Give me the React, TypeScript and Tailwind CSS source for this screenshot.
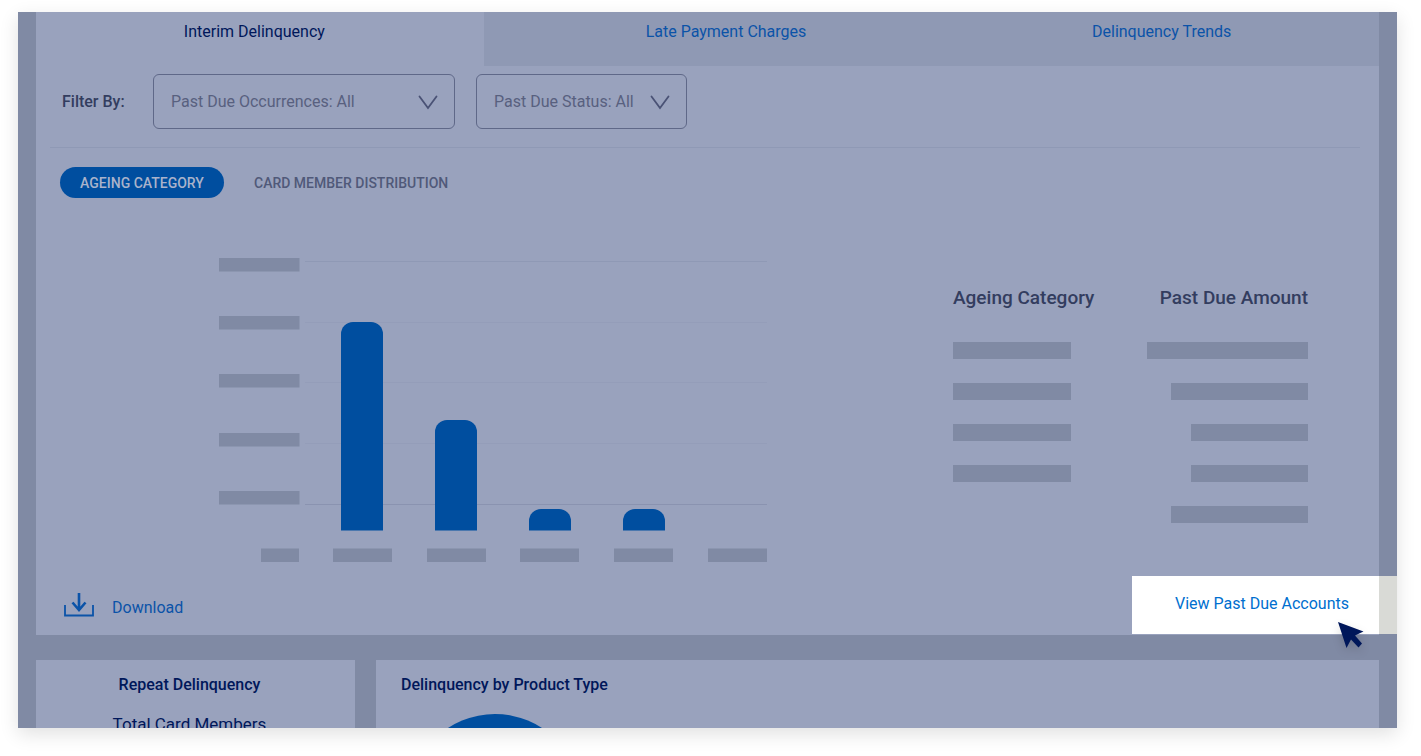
import React from "react";

const yTicks = [
  { label: 18, line: 21, color: "#8f99b5" },
  { label: 76, line: 82, color: "#949db9" },
  { label: 134, line: 142, color: "#949db9" },
  { label: 193, line: 203, color: "#949db9" },
  { label: 251, line: 264, color: "#8a93b0" },
];

const bars = [
  { x: 122, height: 208 },
  { x: 216, height: 110 },
  { x: 310, height: 21 },
  { x: 404, height: 21 },
];

const xLabels = [
  { x: 42, width: 38 },
  { x: 114, width: 59 },
  { x: 208, width: 59 },
  { x: 301, width: 59 },
  { x: 395, width: 59 },
  { x: 489, width: 59 },
];

function AgeingChart() {
  return (
    <svg width="549" height="322" viewBox="0 0 549 322" role="img" aria-label="Past due amount by ageing category">
      {yTicks.map((t) => (
        <g key={t.label}>
          <rect x="0" y={t.label} width="80.500" height="13.500" fill="#808aa4" />
          <rect x="86" y={t.line} width="462" height="1" fill={t.color} />
        </g>
      ))}
      {bars.map((b) => {
        const top = 290 - b.height;
        return (
          <path
            key={b.x}
            d={`M${b.x} 290.500V${top + 12}a12 12 0 0 1 12 -12h18a12 12 0 0 1 12 12V290.500z`}
            fill="#004e9f"
          />
        );
      })}
      {xLabels.map((l) => (
        <rect key={l.x} x={l.x} y="308.500" width={l.width} height="13.500" fill="#808aa4" />
      ))}
    </svg>
  );
}

function FilterSelect({ name, label, className }: { name: string; label: string; className: string }) {
  return (
    <div className={`relative ${className}`}>
      <select
        aria-label={name}
        className="h-[55px] w-full appearance-none rounded-md border border-[#5f6888] bg-transparent pl-[17px] text-base text-[#58607f]"
      >
        <option>{label}</option>
      </select>
      <svg
        className="pointer-events-none absolute top-[21px] right-4"
        width="21"
        height="15"
        viewBox="0 0 21 15"
        fill="none"
        stroke="#4a5275"
        strokeWidth="1.800"
      >
        <path d="M1.500 1.500 10 13 18.500 1.500" strokeLinecap="round" strokeLinejoin="miter" />
      </svg>
    </div>
  );
}

const rows = [
  { category: true, amount: "w-[161px]" },
  { category: true, amount: "w-[137px]" },
  { category: true, amount: "w-[117px]" },
  { category: true, amount: "w-[117px]" },
  { category: false, amount: "w-[137px]" },
];

function AgeingTable() {
  return (
    <table className="w-[355px] border-collapse">
      <thead>
        <tr className="h-6 text-[19px] leading-6 text-[#333d5f]">
          <th className="p-0 text-left font-medium">Ageing Category</th>
          <th className="p-0 text-right font-medium">Past Due Amount</th>
        </tr>
        <tr className="h-5" aria-hidden="true" />
      </thead>
      <tbody>
        {rows.map((r, i) => (
          <tr key={i} className="h-[41px]">
            <td className="p-0">{r.category && <div className="h-[17px] w-[118px] bg-[#808aa4]" />}</td>
            <td className="p-0">
              <div className={`ml-auto h-[17px] bg-[#808aa4] ${r.amount}`} />
            </td>
          </tr>
        ))}
      </tbody>
    </table>
  );
}

export default function App() {
  return (
    <div className="h-screen overflow-hidden bg-white pt-3 pr-6 pb-7 pl-[18px] font-['Roboto','Liberation_Sans',sans-serif]">
      <main className="h-full overflow-hidden bg-[#808aa4] px-[18px] shadow-[0_6px_18px_rgba(0,0,0,0.12)]">
        <section className="relative flex flex-col bg-[#99a2bd]">
          <nav className="grid grid-cols-3 text-center text-base leading-6">
            <button className="flex h-[54px] justify-center pt-2 pr-[11px] text-[#00175a]">Interim Delinquency</button>
            <button className="flex h-[54px] justify-center bg-[#8f99b4] pt-2 pl-[37px] text-[#0b53a8]">
              Late Payment Charges
            </button>
            <button className="flex h-[54px] justify-center bg-[#8f99b4] pt-2 pl-[13px] text-[#0b53a8]">
              Delinquency Trends
            </button>
          </nav>

          <div className="mr-[19px] ml-[14px] flex items-center border-b border-[#8f99b5] pt-2 pb-[18px] pl-3">
            <span className="w-[91px] text-base font-medium text-[#333d5f]">Filter By:</span>
            <FilterSelect name="Past due occurrences" label="Past Due Occurrences: All" className="w-[302px]" />
            <FilterSelect name="Past due status" label="Past Due Status: All" className="ml-[21px] w-[211px]" />
          </div>

          <div className="flex gap-[30px] pt-[19px] pl-6 text-sm font-medium">
            <button className="h-[31px] w-[164px] rounded-full bg-[#004e9f] text-[#a9b3cb]">AGEING CATEGORY</button>
            <button className="h-[31px] text-[#505979]">CARD MEMBER DISTRIBUTION</button>
          </div>

          <div className="flex justify-between pt-[42px] pr-[71px] pl-[183px]">
            <AgeingChart />
            <div className="pt-[46px]">
              <AgeingTable />
            </div>
          </div>

          <a href="#download" className="flex h-[73px] items-center gap-[18px] pt-[18px] pl-7 text-base text-[#0b53a8]">
            <svg width="30" height="24" viewBox="0 0 30 24" fill="none" stroke="#0b53a8" className="mb-[6px]">
              <path d="M1 12V22.500H29V12" strokeWidth="1.800" />
              <path d="M15 0V16M8.500 9.500 15 17l6.500-7.500" strokeWidth="2.600" />
            </svg>
            <span className="mb-1 pt-1">Download</span>
          </a>

          <div className="absolute -right-[18px] bottom-px flex h-[58px] w-[265px]">
            <div className="flex flex-1 justify-end bg-white pt-4 pr-[30px]">
              <a href="#accounts" className="text-base leading-6 whitespace-nowrap text-[#006fcf]">
                View Past Due Accounts
              </a>
            </div>
            <div className="w-[18px] bg-[#d9dad6]" />
            <svg
              className="absolute right-7 -bottom-[20px] drop-shadow-[0_4px_5px_rgba(0,0,0,0.15)]"
              width="31"
              height="32"
              viewBox="0 0 31 32"
            >
              <path d="M0 0 25.500 9.500 17 13.500 24 21.500 20.500 25.500 13 17.500 8.500 26Z" fill="#00175a" />
            </svg>
          </div>
        </section>

        <div className="flex gap-[21px] pt-[25px]">
          <section className="h-72 w-[319px] bg-[#99a2bd] pt-[13px] pr-3 text-center text-base leading-6 text-[#00175a]">
            <h2 className="font-medium">Repeat Delinquency</h2>
            <p className="pt-[15px] text-[17px]">Total Card Members</p>
          </section>
          <section className="h-72 flex-1 bg-[#99a2bd] pt-[13px] pl-[25px] text-base leading-6 text-[#00175a]">
            <h2 className="font-medium">Delinquency by Product Type</h2>
            <svg className="mt-[17px] ml-2" width="172" height="172" viewBox="0 0 172 172">
              <circle cx="86" cy="86" r="86" fill="#004e9f" />
            </svg>
          </section>
        </div>
      </main>
    </div>
  );
}
